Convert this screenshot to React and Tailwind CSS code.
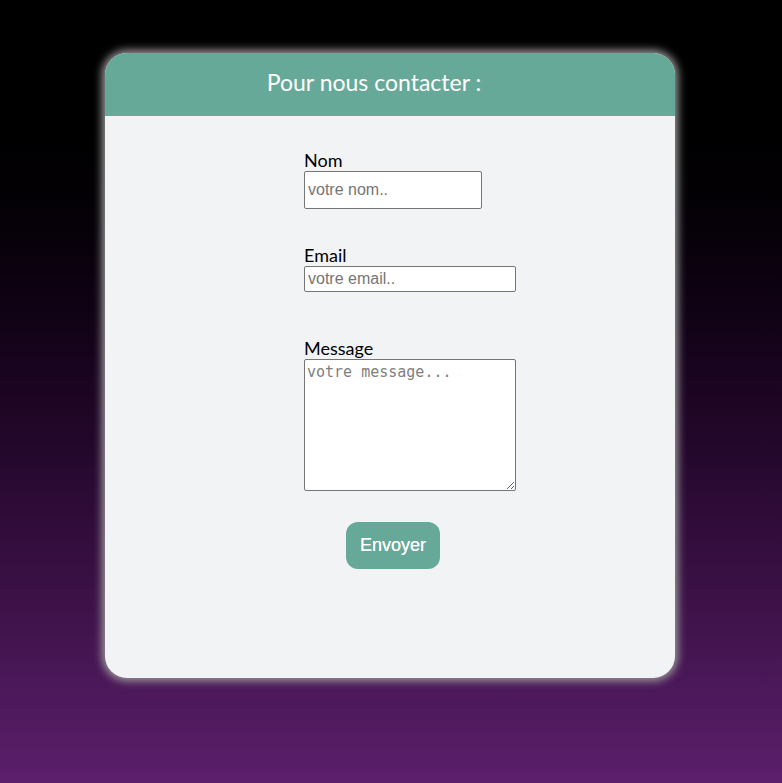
export default function App() {
  return (
    <div className="min-h-[783px] w-full bg-gradient-to-b from-black from-[5%] to-[#5c1f6c] pt-[53px] font-['Lato',sans-serif]">
      <div className="ml-[105px] flex h-[625px] w-[570px] flex-col overflow-hidden rounded-[22px] bg-[#f2f3f5] shadow-[0_0_8px_3px_#9a9a9a]">
        {/* header */}
        <div className="flex h-[63px] items-center justify-center bg-[#67a998] pb-[5px] pr-[32px]">
          <h2 className="m-0 text-[23px] font-normal text-white">Pour nous contacter :</h2>
        </div>

        {/* form */}
        <form className="flex flex-col pl-[199px] pt-[33px]" onSubmit={(e) => e.preventDefault()}>
          <label className="text-[18px] leading-[22px] text-black">Nom</label>
          <input
            type="text"
            placeholder="votre nom.."
            className="h-[38px] w-[178px] rounded-[2px] border border-[#767676] bg-white px-[3px] font-['Liberation_Sans',sans-serif] text-[16px] text-black outline-none placeholder:text-[#757575]"
          />

          <label className="mt-[35px] text-[18px] leading-[22px] text-black">Email</label>
          <input
            type="email"
            placeholder="votre email.."
            className="h-[26px] w-[212px] rounded-[2px] border border-[#767676] bg-white px-[3px] font-['Liberation_Sans',sans-serif] text-[16px] text-black outline-none placeholder:text-[#757575]"
          />

          <label className="mt-[45px] text-[18px] leading-[22px] text-black">Message</label>
          <textarea
            placeholder="votre message..."
            className="h-[132px] w-[212px] rounded-[2px] border border-[#767676] bg-white px-[2px] py-[1px] font-['DejaVu_Sans_Mono',monospace] text-[15px] text-black outline-none placeholder:text-[#808080]"
          />

          <button
            type="submit"
            className="ml-[42px] mt-[31px] h-[47px] w-[94px] rounded-[12px] bg-[#67a998] font-['Liberation_Sans',sans-serif] text-[18px] text-white [text-shadow:0_0_0.4px_white]"
          >
            Envoyer
          </button>
        </form>
      </div>
    </div>
  );
}
